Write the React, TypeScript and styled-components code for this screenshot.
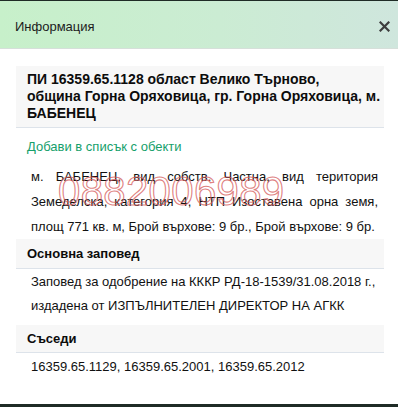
import React from 'react';
import styled, { createGlobalStyle } from 'styled-components';

const Global = createGlobalStyle`
  html, body {
    margin: 0;
    padding: 0;
    background: #1f2b26;
  }
  body {
    font-family: 'Liberation Sans', Arial, sans-serif;
    font-size: 13px;
    color: #111;
  }
`;

const Popup_ = styled.div`
  margin-top: 1px;
  height: 403px;
  background: #fff;
  display: flex;
  flex-direction: column;
  overflow: hidden;
`;

const Header_ = styled.div`
  height: 48px;
  box-sizing: border-box;
  flex-shrink: 0;
  display: flex;
  align-items: center;
  justify-content: space-between;
  padding: 4px 3px 0 15px;
  background: linear-gradient(90deg, #c7f0ca 0%, #cbecd3 55%, #cfe6dd 100%);
  border-bottom: 1px solid #d6dfda;
`;

const Title_ = styled.div`
  font-size: 13px;
  color: #1c1c1c;
`;

const Close_ = styled.button`
  border: none;
  background: none;
  padding: 0;
  width: 22px;
  height: 22px;
  display: flex;
  align-items: center;
  justify-content: center;
  cursor: pointer;
`;

const Body_ = styled.div`
  padding: 16px 14px 0 16px;
`;

const InfoBox_ = styled.div<{ $pad: string; $size?: number; $lh?: number; $mt?: number }>`
  background: #f7f7f7;
  border-bottom: 1px solid #dde3ea;
  padding: ${(p) => p.$pad};
  margin-top: ${(p) => p.$mt || 0}px;
  font-weight: bold;
  font-size: ${(p) => p.$size || 13}px;
  line-height: ${(p) => p.$lh || 16}px;
  color: #0c0c0c;
`;

const Link_ = styled.a`
  display: block;
  margin: 11px 0 9px 11px;
  line-height: 16px;
  color: #16a06b;
  text-decoration: none;
  cursor: pointer;
`;

const Text_ = styled.div<{ $lh: number; $mt?: number; $justify?: boolean }>`
  position: relative;
  padding: 0 6px 0 15px;
  margin-top: ${(p) => p.$mt || 0}px;
  line-height: ${(p) => p.$lh}px;
  text-align: ${(p) => (p.$justify ? 'justify' : 'left')};
  color: #111;
`;

const Watermark_ = styled.div`
  position: absolute;
  left: 42px;
  top: 7px;
  font-size: 40px;
  line-height: 40px;
  letter-spacing: 0.4px;
  color: transparent;
  -webkit-text-stroke: 1.1px rgba(214, 96, 96, 0.8);
  pointer-events: none;
`;

export default function App() {
  return (
    <>
      <Global />
      <Popup_>
        <Header_>
          <Title_>Информация</Title_>
          <Close_ aria-label="close">
            <svg width="11" height="11" viewBox="0 0 11 11">
              <path d="M1.5 1.5 L9.5 9.5 M9.5 1.5 L1.5 9.5" stroke="#3d3d3d" strokeWidth="2.2" strokeLinecap="square" />
            </svg>
          </Close_>
        </Header_>
        <Body_>
          <InfoBox_ $pad="5px 3px 5px 11px" $size={14} $lh={17} $mt={1}>
            ПИ 16359.65.1128 област Велико Търново,
            <br />
            община Горна Оряховица, гр. Горна Оряховица, м. БАБЕНЕЦ
          </InfoBox_>
          <Link_>Добави в списък с обекти</Link_>
          <Text_ $lh={25} $justify>
            м. БАБЕНЕЦ, вид собств. Частна, вид територия Земеделска, категория 4, НТП Изоставена орна
            земя, площ 771 кв. м, Брой върхове: 9 бр., Брой върхове: 9 бр.
            <Watermark_>0882006989</Watermark_>
          </Text_>
          <InfoBox_ $pad="7px 11px 6px">Основна заповед</InfoBox_>
          <Text_ $lh={24} $mt={1}>
            Заповед за одобрение на КККР РД-18-1539/31.08.2018 г., издадена от ИЗПЪЛНИТЕЛЕН ДИРЕКТОР НА АГКК
          </Text_>
          <InfoBox_ $pad="6px 11px 5px" $mt={7}>
            Съседи
          </InfoBox_>
          <Text_ $lh={24} $mt={2}>
            16359.65.1129, 16359.65.2001, 16359.65.2012
          </Text_>
        </Body_>
      </Popup_>
    </>
  );
}
